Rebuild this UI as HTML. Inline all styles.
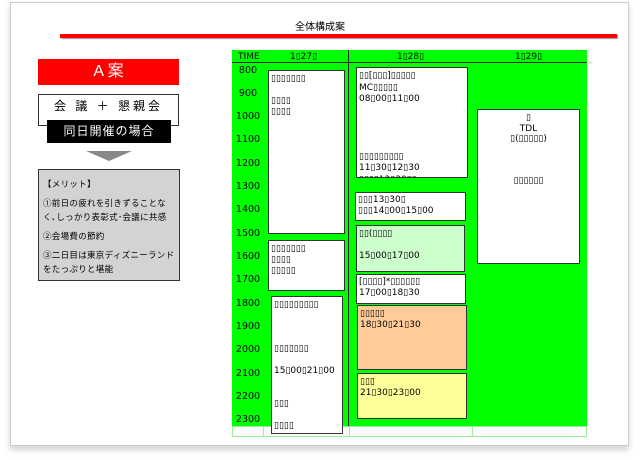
<!DOCTYPE html>
<html><head><meta charset="utf-8"><style>
*{margin:0;padding:0;box-sizing:border-box}
body{width:640px;height:460px;background:#fff;position:relative;overflow:hidden;font-family:"Liberation Sans","Noto Sans CJK JP",sans-serif}
.a{position:absolute}
.frame{left:10px;top:2px;width:619px;height:444px;border:1px solid #ccc;box-shadow:0 4px 6px rgba(0,0,0,.18);background:#fff}
.t{font-family:"DejaVu Sans","Noto Sans CJK JP",sans-serif;font-size:9px;line-height:11px;color:#000;white-space:nowrap}
.box{position:absolute;border:1px solid #333;background:#fff;padding:3px 2px;font-family:"DejaVu Sans","Noto Sans CJK JP",sans-serif;font-size:9px;line-height:11px;white-space:nowrap;overflow:hidden}
.hr{position:absolute;left:232px;width:32px;text-align:center;font-family:"DejaVu Sans",sans-serif;font-size:9.5px;line-height:10px}
.jp{font-family:"Liberation Sans","Noto Sans CJK JP",sans-serif}
</style></head><body>
<div class="a frame"></div>
<div class="a jp" style="left:0;width:640px;top:18px;text-align:center;font-size:10px">全体構成案</div>
<div class="a" style="left:60px;top:34px;width:557px;height:4px;background:#f00;box-shadow:1px 1px 1px #999"></div>

<!-- left panel -->
<div class="a jp" style="left:38px;top:59px;width:141px;height:26px;background:#f00;color:#fff;font-size:16px;line-height:26px;text-align:center">A 案</div>
<div class="a jp" style="left:38px;top:94px;width:141px;height:32px;border:1px solid #333;background:#fff;font-size:12px;text-align:center;line-height:22px;letter-spacing:3px">会 議 ＋ 懇親会</div>
<div class="a jp" style="left:47px;top:120px;width:124px;height:23px;background:#000;color:#fff;font-size:12px;text-align:center;line-height:23px;letter-spacing:1px">同日開催の場合</div>
<div class="a" style="left:86px;top:151px;width:0;height:0;border-left:23px solid transparent;border-right:23px solid transparent;border-top:10px solid #888"></div>
<div class="a jp" style="left:38px;top:169px;width:142px;height:112px;border:1px solid #333;background:#d3d3d3;font-size:8.5px;padding:7px 4px;line-height:14px;letter-spacing:0.3px">
【メリット】<div style="height:5px"></div>①前日の疲れを引きずることなく､しっかり表彰式･会議に共感<div style="height:5px"></div>②会場費の節約<div style="height:5px"></div>③二日目は東京ディズニーランドをたっぷりと堪能</div>

<!-- schedule -->
<div class="a" style="left:232px;top:50px;width:355px;height:376px;background:#00ff00"></div>
<div class="a" style="left:232px;top:62px;width:355px;height:1px;background:#222"></div>
<div class="a" style="left:348px;top:50px;width:1px;height:376px;background:#222"></div>
<div class="a" style="left:232px;top:426px;width:355px;height:11px;border:1px solid #99ee99;background:#fff"></div>
<div class="a" style="left:263px;top:426px;width:1px;height:11px;background:#99ee99"></div>
<div class="a" style="left:349px;top:426px;width:1px;height:11px;background:#99ee99"></div>
<div class="a" style="left:472px;top:426px;width:1px;height:11px;background:#99ee99"></div>
<div class="a t" style="left:238px;top:52px">TIME</div>
<div class="a t" style="left:290px;top:52px">1▯27▯</div>
<div class="a t" style="left:397px;top:52px">1▯28▯</div>
<div class="a t" style="left:515px;top:52px">1▯29▯</div>

<div class="hr" style="top:66px">800</div>
<div class="hr" style="top:89px">900</div>
<div class="hr" style="top:112px">1000</div>
<div class="hr" style="top:135px">1100</div>
<div class="hr" style="top:159px">1200</div>
<div class="hr" style="top:182px">1300</div>
<div class="hr" style="top:205px">1400</div>
<div class="hr" style="top:229px">1500</div>
<div class="hr" style="top:252px">1600</div>
<div class="hr" style="top:275px">1700</div>
<div class="hr" style="top:299px">1800</div>
<div class="hr" style="top:322px">1900</div>
<div class="hr" style="top:345px">2000</div>
<div class="hr" style="top:369px">2100</div>
<div class="hr" style="top:392px">2200</div>
<div class="hr" style="top:415px">2300</div>

<div class="box" style="left:268px;top:70px;width:77px;height:164px">▯▯▯▯▯▯▯<br><br>▯▯▯▯<br>▯▯▯▯</div>
<div class="box" style="left:268px;top:240px;width:77px;height:51px">▯▯▯▯▯▯▯<br>▯▯▯▯<br>▯▯▯▯▯</div>
<div class="box" style="left:271px;top:296px;width:72px;height:138px">▯▯▯▯▯▯▯▯▯<br><br><br><br>▯▯▯▯▯▯▯<br><br>15▯00▯21▯00<br><br><br>▯▯▯<br><br>▯▯▯▯</div>

<div class="box" style="left:356px;top:67px;width:112px;height:111px;line-height:11.5px">▯▯[▯▯▯]▯▯▯▯▯<br>MC▯▯▯▯▯<br>08▯00▯11▯00<br><br><br><br><br>▯▯▯▯▯▯▯▯▯<br>11▯30▯12▯30<br>▯▯▯▯12▯30▯▯</div>
<div class="box" style="left:355px;top:192px;width:111px;height:29px;padding-top:2px">▯▯▯13▯30▯<br>▯▯▯14▯00▯15▯00</div>
<div class="box" style="left:356px;top:225px;width:109px;height:47px;background:#ccffcc">▯▯(▯▯▯▯<br><br>15▯00▯17▯00</div>
<div class="box" style="left:356px;top:274px;width:110px;height:30px;padding-top:2px">[▯▯▯▯]*▯▯▯▯▯▯<br>17▯00▯18▯30</div>
<div class="box" style="left:357px;top:305px;width:110px;height:65px;background:#ffcc99">▯▯▯▯▯<br>18▯30▯21▯30</div>
<div class="box" style="left:357px;top:373px;width:110px;height:46px;background:#ffff99">▯▯▯<br>21▯30▯23▯00</div>

<div class="box" style="left:477px;top:109px;width:103px;height:155px;text-align:center;padding-top:3px;line-height:10.5px">▯<br>TDL<br>▯(▯▯▯▯▯)<br><br><br><br>▯▯▯▯▯▯</div>
</body></html>
